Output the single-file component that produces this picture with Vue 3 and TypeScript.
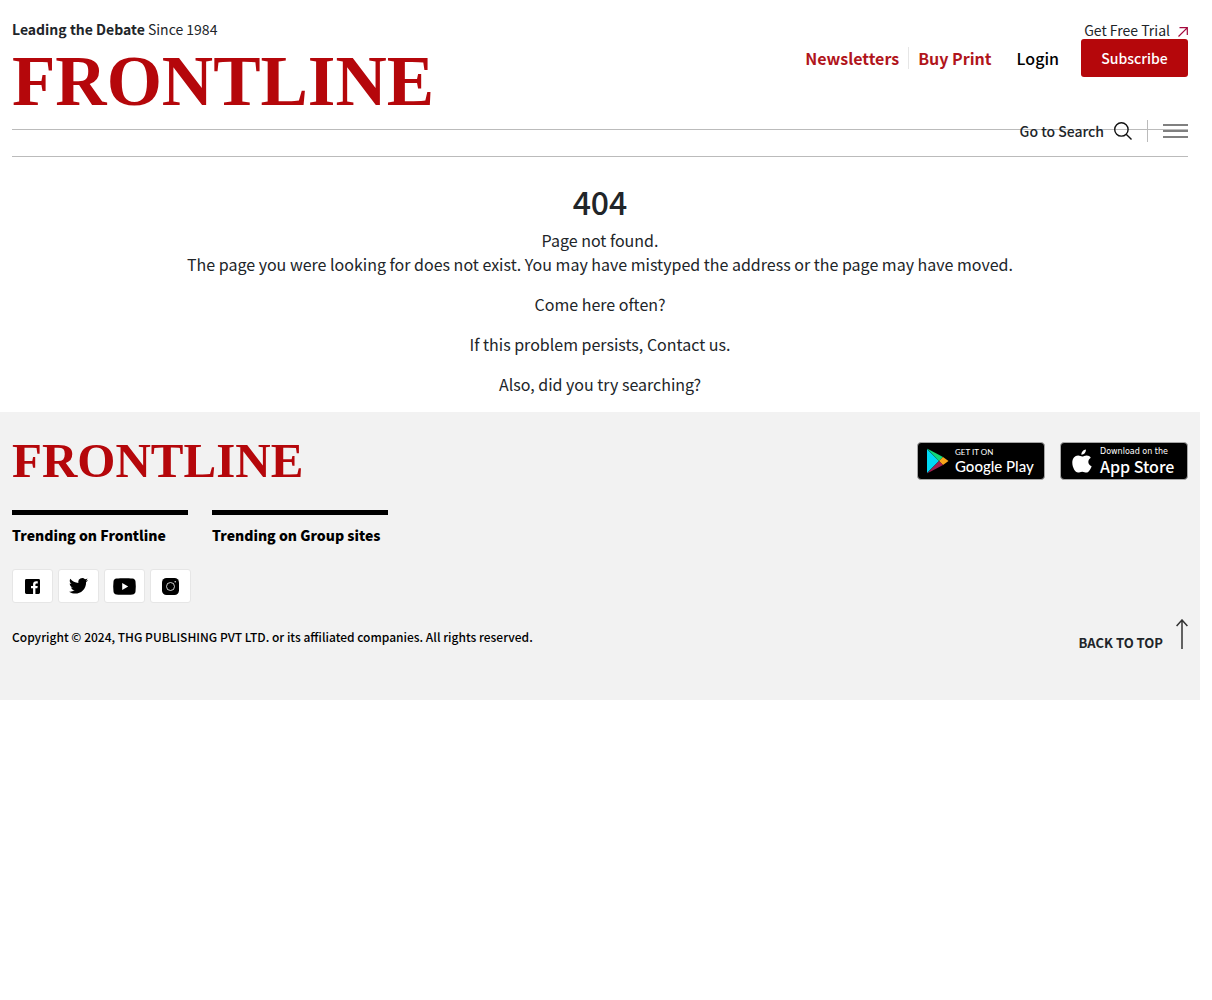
<script setup lang="ts">
interface Social {
  label: string
  icon: 'facebook' | 'twitter' | 'youtube' | 'instagram'
}

const trending: string[] = ['Trending on Frontline', 'Trending on Group sites']

const socials: Social[] = [
  { label: 'Facebook', icon: 'facebook' },
  { label: 'Twitter', icon: 'twitter' },
  { label: 'YouTube', icon: 'youtube' },
  { label: 'Instagram', icon: 'instagram' },
]

function backToTop(): void {
  window.scrollTo({ top: 0, behavior: 'smooth' })
}
</script>

<template>
  <div class="page">
    <header class="header container">
      <div class="masthead">
        <div class="brand">
          <p class="tagline"><strong>Leading the Debate</strong> Since 1984</p>
          <a class="wordmark" href="#">FRONTLINE</a>
        </div>
        <nav class="account" aria-label="Account">
          <a class="account-link red" href="#">Newsletters</a>
          <a class="account-link red divided" href="#">Buy Print</a>
          <a class="account-link login" href="#">Login</a>
          <div class="subscribe-group">
            <a class="trial" href="#">
              Get Free Trial
              <svg width="10" height="14" viewBox="0 0 10 14" fill="none" stroke="#a3083c" stroke-width="1.2" aria-hidden="true">
                <path d="M.5 13.500 9.200 4.800M1.500 4.700h7.800V12" />
              </svg>
            </a>
            <button class="subscribe" type="button">Subscribe</button>
          </div>
        </nav>
      </div>
      <div class="menu-row">
        <div class="tools">
          <a class="search" href="#">
            Go to Search
            <svg width="18" height="18" viewBox="0 0 18 18" fill="none" stroke="#111" stroke-width="1.4" aria-hidden="true">
              <circle cx="7.4" cy="7.4" r="6.7" />
              <path d="m12.2 12.2 5.3 5.3" />
            </svg>
          </a>
          <button class="burger" type="button" aria-label="Open menu">
            <span></span><span></span><span></span>
          </button>
        </div>
      </div>
    </header>

    <main class="message container">
      <h1>404</h1>
      <p class="lead">Page not found.<br />The page you were looking for does not exist. You may have mistyped the address or the page may have moved.</p>
      <p>Come here often?</p>
      <p>If this problem persists, <a href="#">Contact us.</a></p>
      <p>Also, did you try searching?</p>
    </main>

    <footer class="footer container">
      <div class="footer-top">
        <a class="wordmark small" href="#">FRONTLINE</a>
        <div class="stores">
          <a class="store google" href="#">
            <svg width="23" height="26" viewBox="0 0 23 26" aria-hidden="true">
              <path fill="#00d9f5" d="M1 1v24l12-12z" />
              <path fill="#12d979" d="M1 .6 17 9l-4 4z" />
              <path fill="#f9a51a" d="m17 9 5.5 4L17 17l-4-4z" />
              <path fill="#a32150" d="m13 13 4 4L1 25.4z" />
            </svg>
            <span class="store-text"><small>GET IT ON</small><b>Google Play</b></span>
          </a>
          <a class="store apple" href="#">
            <svg width="20" height="25" viewBox="0 0 20 25" fill="#fff" aria-hidden="true">
              <path d="M13.9.5c.2 2.8-1.9 5.3-4.5 5.2C9.2 3.200 11.400.8 13.900.5zM18.800 8.800c-3.600 2.200-3.100 6.900.8 8.400-.7 2.200-2.800 6.300-5.200 6.400-1.600 0-2.300-.9-4.200-.9s-2.600.9-4.100.9C3.200 23.600.3 18.400.3 13.800c0-4.300 2.500-7.200 5.800-7.200 1.700 0 3 1 4.100 1s2.500-1.100 4.500-1.100c1.800 0 3.200.9 4.100 2.300z" />
            </svg>
            <span class="store-text"><small>Download on the</small><b>App Store</b></span>
          </a>
        </div>
      </div>

      <div class="trending">
        <h2 v-for="title in trending" :key="title">{{ title }}</h2>
      </div>

      <div class="socials">
        <a v-for="s in socials" :key="s.icon" href="#" :aria-label="s.label">
          <svg v-if="s.icon === 'facebook'" width="15" height="15" viewBox="0 0 16 16">
            <path d="M1.500 0h13A1.500 1.500 0 0 1 16 1.500v13a1.500 1.500 0 0 1-1.500 1.500h-3.400V9.900h2.100l.4-2.500h-2.500V5.900c0-.8.4-1.200 1.300-1.200h1.200V2.500c-3.100-.6-5 .4-5 3v1.900H6.400v2.500h2.200V16H1.500A1.500 1.500 0 0 1 0 14.500v-13A1.500 1.500 0 0 1 1.500 0z" />
          </svg>
          <svg v-else-if="s.icon === 'twitter'" width="19" height="16" viewBox="0 0 19 16">
            <path d="M19 1.900c-.7.3-1.400.5-2.200.6.800-.5 1.400-1.200 1.700-2.100-.7.4-1.600.8-2.500.9A3.900 3.900 0 0 0 9.400 4.900C6.100 4.700 3.300 3.200 1.300.7.200 2.500.8 4.800 2.500 5.900c-.6 0-1.200-.2-1.800-.5 0 1.900 1.300 3.500 3.100 3.900-.6.200-1.200.2-1.800.1.500 1.500 1.900 2.600 3.700 2.700A7.900 7.900 0 0 1 0 13.700C7.600 18.500 17.200 13.600 17.100 4c.7-.6 1.400-1.300 1.900-2.100z" />
          </svg>
          <svg v-else-if="s.icon === 'youtube'" width="23" height="17" viewBox="0 0 23 17">
            <path fill-rule="evenodd" d="M3.500.6C8 0 15 0 19.500.6c1.800.2 2.800 1.200 3 3 .4 3.300.4 6.500 0 9.800-.2 1.800-1.200 2.800-3 3-4.500.6-11.500.6-16 0-1.800-.2-2.800-1.200-3-3-.4-3.300-.4-6.500 0-9.800.2-1.800 1.200-2.800 3-3zM9.200 5v7l6-3.500z" />
          </svg>
          <svg v-else width="17" height="17" viewBox="0 0 17 17">
            <rect width="17" height="17" rx="4.500" />
            <circle cx="8.500" cy="8.500" r="4" fill="none" stroke="#fff" stroke-width=".8" />
            <circle cx="13.200" cy="3.800" r=".7" fill="#fff" />
          </svg>
        </a>
      </div>

      <div class="footer-bottom">
        <p>Copyright © 2024, THG PUBLISHING PVT LTD. or its affiliated companies. All rights reserved.</p>
        <button class="to-top" type="button" @click="backToTop">
          BACK TO TOP
          <svg width="12" height="30" viewBox="0 0 12 30" fill="none" stroke="#333" stroke-width="1.500" aria-hidden="true">
            <path d="M6 30V1M.6 7 6 1l5.400 6" />
          </svg>
        </button>
      </div>
    </footer>
  </div>
</template>

<style>
html {
  background: #fff;
}
</style>

<style scoped>
* {
  box-sizing: border-box;
}

.page {
  margin-right: 12px;
  color: #212529;
  font: 400 16px/24px "Noto Sans CJK SC", "Noto Sans", sans-serif;
}

.container {
  padding-left: 12px;
  padding-right: 12px;
}

a {
  color: inherit;
  text-decoration: none;
}

p,
h1,
h2 {
  margin: 0;
}

button {
  border: 0;
  padding: 0;
  background: none;
  color: inherit;
  font: inherit;
  cursor: pointer;
}

svg {
  display: block;
  flex: none;
}

.masthead {
  display: flex;
  justify-content: space-between;
  height: 130px;
  padding-top: 19px;
  border-bottom: 1px solid #bbb;
}

.tagline {
  font-size: 14px;
  line-height: 20px;
}

.tagline strong {
  font-weight: 700;
}

.wordmark {
  display: block;
  margin-top: 8px;
  color: #b5070b;
  font: 700 71px/68px "Liberation Serif", serif;
}

.account {
  display: flex;
  align-items: flex-start;
}

.account-link {
  margin-top: 28px;
  line-height: 22px;
  font-weight: 500;
  color: #000;
}

.account-link.red {
  color: #b1151b;
  font-weight: 700;
}

.divided {
  margin-left: 9px;
  padding-left: 9px;
  border-left: 1px solid #e6e6e6;
}

.login {
  margin-left: 25px;
}

.subscribe-group {
  display: flex;
  flex-direction: column;
  align-items: flex-end;
  margin-left: 22px;
}

.trial {
  display: flex;
  align-items: center;
  gap: 8px;
  height: 20px;
  padding-top: 2px;
  font-size: 14px;
  line-height: 20px;
}

.subscribe {
  width: 107px;
  height: 38px;
  border-radius: 3px;
  background: #b5070b;
  color: #fff;
  font-size: 14px;
  font-weight: 500;
}

.menu-row {
  position: relative;
  height: 27px;
  border-bottom: 1px solid #bbb;
}

.tools {
  position: absolute;
  right: 0;
  top: -10px;
  display: flex;
  align-items: center;
}

.search {
  display: flex;
  align-items: center;
  gap: 10px;
  height: 22px;
  padding-right: 15px;
  border-right: 1px solid #bbb;
  font-size: 14px;
  font-weight: 500;
}

.burger {
  display: grid;
  gap: 4px;
  width: 25px;
  margin-left: 15px;
}

.burger span {
  height: 2px;
  background: #808080;
}

.message {
  padding-top: 23px;
  text-align: center;
}

.message h1 {
  margin-bottom: 6px;
  font-size: 32px;
  line-height: 42px;
  font-weight: 500;
}

.message p {
  margin-bottom: 16px;
}

.footer {
  padding-top: 30px;
  padding-bottom: 51px;
  background: #f2f2f2;
  color: #000;
}

.footer-top {
  display: flex;
  justify-content: space-between;
  height: 38px;
}

.wordmark.small {
  margin: 0;
  font-size: 49px;
  line-height: 38px;
}

.stores {
  display: flex;
  gap: 15px;
}

.store {
  display: flex;
  align-items: center;
  width: 128px;
  height: 38px;
  border: 1px solid #a6a6a6;
  border-radius: 4px;
  background: #000;
  color: #fff;
  white-space: nowrap;
}

.google {
  gap: 6px;
  padding-left: 8px;
}

.apple {
  gap: 8px;
  padding-left: 11px;
}

.store-text {
  display: grid;
}

.store small {
  font-size: 8px;
  line-height: 10px;
}

.store b {
  font-size: 16px;
  line-height: 18px;
  font-weight: 500;
}

.google .store-text {
  font-family: Lato, sans-serif;
}

.google b {
  font-size: 15px;
}

.apple small {
  font-family: "DejaVu Sans", sans-serif;
}

.trending {
  display: grid;
  grid-template-columns: repeat(6, 1fr);
  gap: 24px;
  margin-top: 30px;
}

.trending h2 {
  padding-top: 10px;
  border-top: 5px solid #000;
  font-size: 14px;
  line-height: 20px;
  font-weight: 900;
  white-space: nowrap;
}

.socials {
  display: flex;
  gap: 5px;
  margin-top: 24px;
}

.socials a {
  display: grid;
  place-items: center;
  width: 41px;
  height: 34px;
  border: 1px solid #e6e6e6;
  border-radius: 3px;
  background: #fff;
}

.footer-bottom {
  display: flex;
  justify-content: space-between;
  align-items: flex-start;
  margin-top: 16px;
}

.footer-bottom p {
  margin-top: 8px;
  font-size: 12px;
  line-height: 20px;
  font-weight: 500;
}

.to-top {
  display: flex;
  align-items: flex-end;
  gap: 13px;
  color: #212529;
  font-size: 13px;
  line-height: 12px;
  font-weight: 700;
}
</style>
